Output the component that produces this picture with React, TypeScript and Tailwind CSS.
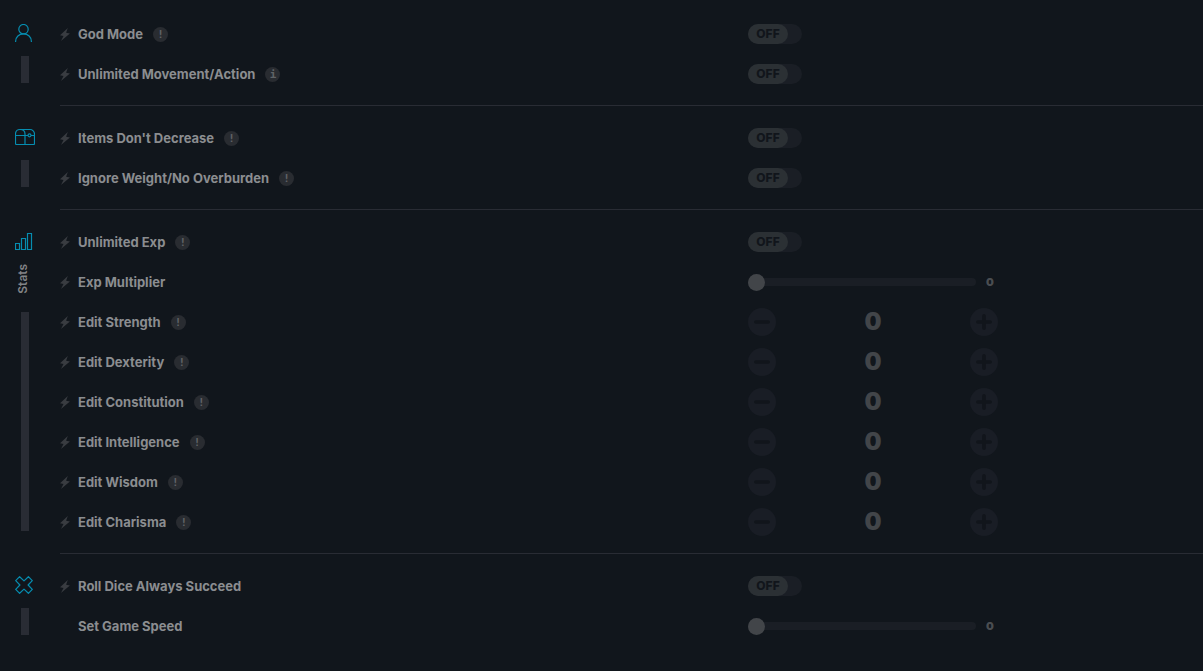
import { useId, useState, type ReactNode } from "react";

type Control = "toggle" | "slider" | "stepper";
type Hint = "!" | "i";

interface Cheat {
  name: string;
  control: Control;
  hint?: Hint;
  hotkey?: boolean;
}

interface Section {
  id: string;
  icon: ReactNode;
  label?: string;
  cheats: Cheat[];
}

const PersonIcon = () => (
  <svg width="18" height="18" viewBox="0 0 18 18" fill="none" stroke="currentColor" strokeWidth="1.2" aria-hidden="true">
    <circle cx="8.5" cy="5.2" r="4.7" />
    <path d="M.6 18v-.6C.6 13 4 9.9 8.5 9.9s7.9 3.1 7.9 7.5v.6" />
  </svg>
);

const ChestIcon = () => (
  <svg width="20" height="18" viewBox="0 0 20 18" fill="none" stroke="currentColor" strokeWidth="1.2" aria-hidden="true">
    <path d="M.5 5.500A4.500 4.500 0 0 1 5 1.500h10a4.500 4.500 0 0 1 4.500 4.500v9.500a1 1 0 0 1-1 1h-17a1 1 0 0 1-1-1Z" />
    <path d="M5 1.500c3 0 5 1.600 5 4.500v10.500M.5 7.500h12.500M16 7.500h3.500" />
    <circle cx="14.500" cy="7.300" r="1.500" />
  </svg>
);

const BarsIcon = () => (
  <svg width="18" height="18" viewBox="0 0 18 18" fill="none" stroke="currentColor" strokeWidth="1.2" aria-hidden="true">
    <path d="M.5 11.500h4v6h-4zM6.500 6.500h4v11h-4zM12.500 1.500h4v16h-4z" />
  </svg>
);

const CrossIcon = () => (
  <svg width="18" height="18" viewBox="0 0 18 18" fill="none" stroke="currentColor" strokeWidth="1.2" strokeLinejoin="round" aria-hidden="true">
    <path d="M4.600.7 9 4.900 13.400.7l3.900 3.900L13.100 9l4.200 4.400-3.900 3.900L9 13.100l-4.400 4.200-3.900-3.900L4.900 9 .7 4.600Z" />
  </svg>
);

const BoltIcon = () => (
  <svg width="10" height="13" viewBox="0 0 10 13" fill="currentColor" aria-hidden="true">
    <path d="M7.800 0 0 7.300l3.500.6L1 13l8.900-7.500-3.800-.7Z" />
  </svg>
);

const stats = ["Strength", "Dexterity", "Constitution", "Intelligence", "Wisdom", "Charisma"];

const sections: Section[] = [
  {
    id: "player",
    icon: <PersonIcon />,
    cheats: [
      { name: "God Mode", control: "toggle", hint: "!", hotkey: true },
      { name: "Unlimited Movement/Action", control: "toggle", hint: "i", hotkey: true },
    ],
  },
  {
    id: "inventory",
    icon: <ChestIcon />,
    cheats: [
      { name: "Items Don't Decrease", control: "toggle", hint: "!", hotkey: true },
      { name: "Ignore Weight/No Overburden", control: "toggle", hint: "!", hotkey: true },
    ],
  },
  {
    id: "stats",
    icon: <BarsIcon />,
    label: "Stats",
    cheats: [
      { name: "Unlimited Exp", control: "toggle", hint: "!", hotkey: true },
      { name: "Exp Multiplier", control: "slider", hotkey: true },
      ...stats.map((s): Cheat => ({ name: `Edit ${s}`, control: "stepper", hint: "!", hotkey: true })),
    ],
  },
  {
    id: "game",
    icon: <CrossIcon />,
    cheats: [
      { name: "Roll Dice Always Succeed", control: "toggle", hotkey: true },
      { name: "Set Game Speed", control: "slider" },
    ],
  },
];

function Toggle({ labelId }: { labelId: string }) {
  const [on, setOn] = useState(false);
  return (
    <button
      type="button"
      role="switch"
      aria-checked={on}
      aria-labelledby={labelId}
      onClick={() => setOn(!on)}
      className={`flex h-5 w-[54px] rounded-full bg-[#1a1e25] ${on ? "justify-end" : "justify-start"}`}
    >
      <span className="flex h-5 w-10 items-center justify-center rounded-full bg-[#2b3034] text-xs font-extrabold text-[#11151b]">
        {on ? "ON" : "OFF"}
      </span>
    </button>
  );
}

function Slider({ labelId }: { labelId: string }) {
  const [value, setValue] = useState(0);
  return (
    <div className="flex items-center gap-2.5">
      <input
        type="range"
        min={0}
        max={10}
        value={value}
        aria-labelledby={labelId}
        onChange={(e) => setValue(Number(e.target.value))}
        className="h-2 w-[228px] appearance-none rounded-full bg-[#1a1e25] [&::-webkit-slider-thumb]:size-[17px] [&::-webkit-slider-thumb]:appearance-none [&::-webkit-slider-thumb]:rounded-full [&::-webkit-slider-thumb]:bg-[#424549]"
      />
      <output className="text-[11px] font-black text-[#4a4d51]">{value}</output>
    </div>
  );
}

function Stepper({ name, labelId }: { name: string; labelId: string }) {
  const [value, setValue] = useState(0);
  const button = "flex size-7 items-center justify-center rounded-full bg-[#191d25] text-[#11151b]";
  return (
    <div role="group" aria-labelledby={labelId} className="flex w-[250px] items-center justify-between">
      <button type="button" aria-label={`Decrease ${name}`} className={button} onClick={() => setValue(value - 1)}>
        <svg width="16" height="16" viewBox="0 0 16 16" stroke="currentColor" strokeWidth="3.600" strokeLinecap="round" aria-hidden="true">
          <path d="M1.800 8h12.400" />
        </svg>
      </button>
      <output className="text-2xl font-black text-[#424549]">{value}</output>
      <button type="button" aria-label={`Increase ${name}`} className={button} onClick={() => setValue(value + 1)}>
        <svg width="16" height="16" viewBox="0 0 16 16" stroke="currentColor" strokeWidth="3.600" strokeLinecap="round" aria-hidden="true">
          <path d="M1.800 8h12.400M8 1.800v12.400" />
        </svg>
      </button>
    </div>
  );
}

function CheatRow({ cheat }: { cheat: Cheat }) {
  const labelId = useId();
  return (
    <li className="flex h-10 items-center">
      <div className="flex w-[688px] shrink-0 items-center">
        <span className="flex w-[18px] text-[#393c41]">{cheat.hotkey && <BoltIcon />}</span>
        <span id={labelId} className="pt-0.5 text-[13px] font-bold text-[#8b8d90]">
          {cheat.name}
        </span>
        {cheat.hint && (
          <span className="ml-2.5 flex size-[15px] items-center justify-center rounded-full bg-[#292c31] font-['DejaVu_Sans_Mono',monospace] text-[11px] leading-none font-bold text-[#606367]">
            {cheat.hint}
          </span>
        )}
      </div>
      {cheat.control === "toggle" && <Toggle labelId={labelId} />}
      {cheat.control === "slider" && <Slider labelId={labelId} />}
      {cheat.control === "stepper" && <Stepper name={cheat.name} labelId={labelId} />}
    </li>
  );
}

export default function App() {
  return (
    <main className="min-h-screen bg-[#11161c] pt-0.5 font-['Inter',sans-serif]">
      {sections.map((section) => (
        <section key={section.id} className="group flex">
          <div className="flex w-[60px] shrink-0 flex-col pt-[22px] pb-[23px] pl-[15px]">
            <div className="text-[#068db0]">{section.icon}</div>
            {section.label && (
              <h2 className="mt-3.5 rotate-180 self-start text-xs font-semibold text-[#818386] [writing-mode:vertical-rl]">
                {section.label}
              </h2>
            )}
            <div className={section.label ? "mt-[18px] ml-1.5 w-2 flex-1 bg-[#292c34]" : "mt-3.5 ml-1.5 w-2 flex-1 bg-[#292c34]"} />
          </div>
          <ul className="flex-1 border-b border-[#292c34] pt-3 pb-[11px] group-last:border-transparent">
            {section.cheats.map((cheat) => (
              <CheatRow key={cheat.name} cheat={cheat} />
            ))}
          </ul>
        </section>
      ))}
    </main>
  );
}
